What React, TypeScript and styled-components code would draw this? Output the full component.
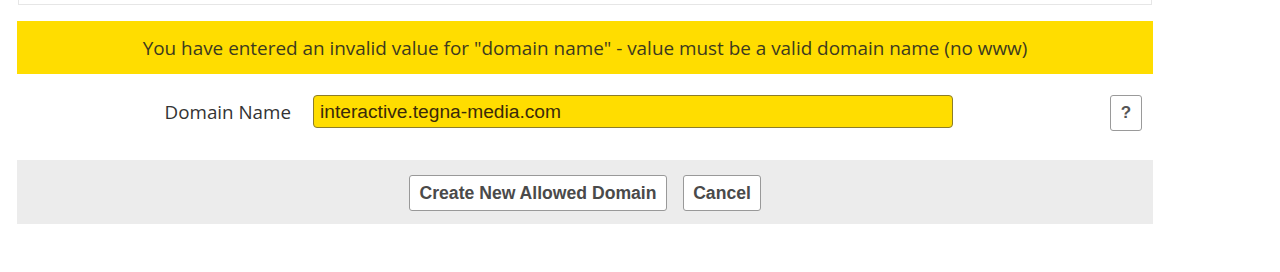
import React from "react";
import styled, { createGlobalStyle } from "styled-components";

const GlobalStyle = createGlobalStyle`
  body {
    margin: 0;
    background: #fff;
    font-family: "Open Sans", "Liberation Sans", sans-serif;
  }
`;

const Page = styled.div`
  width: 1136px;
  padding-left: 17px;
`;

const PrevPanel = styled.div`
  height: 4px;
  margin: 0 1px;
  border: 1px solid #e6e6e6;
  border-top: none;
`;

const ErrorBanner = styled.div`
  margin-top: 16px;
  height: 53px;
  background: #ffdd00;
  color: #3d3a1f;
  font-size: 18.9px;
  display: flex;
  align-items: center;
  justify-content: center;
`;

const FieldRow = styled.div`
  display: grid;
  grid-template-columns: 274px 640px 1fr 32px;
  column-gap: 22px;
  align-items: start;
  padding: 21px 11px 29px 0;
`;

const Label = styled.label`
  text-align: right;
  font-size: 18.8px;
  line-height: 34px;
  color: #333;
`;

const TextInput = styled.input`
  box-sizing: border-box;
  height: 33px;
  padding: 0 6px;
  background: #ffdd00;
  border: 1px solid #8c7d2a;
  border-radius: 4px;
  font-family: "Liberation Sans", Arial, sans-serif;
  font-size: 19.2px;
  color: #3a2a0a;
  outline: none;
`;

const HelpButton = styled.button`
  grid-column: 4;
  box-sizing: border-box;
  width: 32px;
  height: 36px;
  padding: 0;
  background: #fff;
  border: 1px solid #9a9a9a;
  border-radius: 3px;
  font-family: "Liberation Sans", Arial, sans-serif;
  font-weight: bold;
  font-size: 17px;
  color: #555;
`;

const Footer = styled.div`
  box-sizing: border-box;
  height: 64px;
  padding-top: 15px;
  background: #ececec;
  display: flex;
  align-items: flex-start;
  justify-content: center;
  gap: 16px;
`;

const Button = styled.button<{ $width: number }>`
  box-sizing: border-box;
  width: ${(p) => p.$width}px;
  height: 36px;
  padding: 0;
  background: #fff;
  border: 1px solid #999;
  border-radius: 3px;
  font-family: "Liberation Sans", Arial, sans-serif;
  font-weight: bold;
  font-size: 17.6px;
  color: #4a4a4a;
`;

export default function App() {
  return (
    <Page>
      <GlobalStyle />
      <PrevPanel />
      <ErrorBanner>
        You have entered an invalid value for "domain name" - value must be a
        valid domain name (no www)
      </ErrorBanner>
      <FieldRow>
        <Label htmlFor="domain">Domain Name</Label>
        <TextInput
          id="domain"
          defaultValue="interactive.tegna-media.com"
        />
        <HelpButton>?</HelpButton>
      </FieldRow>
      <Footer>
        <Button $width={258}>Create New Allowed Domain</Button>
        <Button $width={78}>Cancel</Button>
      </Footer>
    </Page>
  );
}
